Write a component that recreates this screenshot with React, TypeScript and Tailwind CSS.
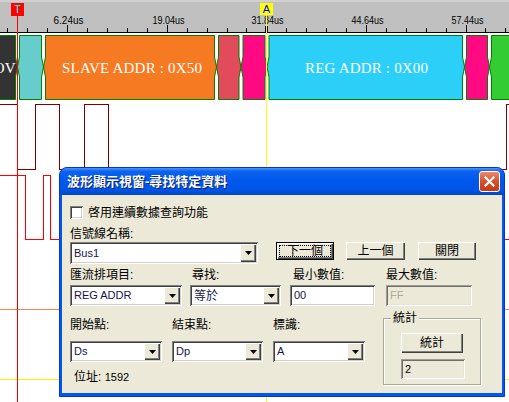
import React from 'react';

const sunken = 'shadow-[inset_1px_1px_0_#808080,inset_-1px_-1px_0_#ffffff,inset_2px_2px_0_#404040,inset_-2px_-2px_0_#d4d0c8]';
const raised = 'shadow-[inset_1px_1px_0_#ffffff,inset_-1px_-1px_0_#404040,inset_-2px_-2px_0_#808080]';
const grayField = 'shadow-[inset_1px_1px_0_#9d9c94,inset_-1px_-1px_0_#ffffff,inset_2px_2px_0_#6f6e68,inset_-2px_-2px_0_#e6e4d9]';

// ruler ticks, every 2.56us (~19.92px), major every 5th
const ticks: number[] = [];
for (let i = 0; i < 26; i++) ticks.push(Math.round(7.4 + i * 19.92));
const labels = ['6.24us', '19.04us', '31.84us', '44.64us', '57.44us'];

const segs = [
  { a: -10, b: 17.5, fill: '#333333' },
  { a: 17.5, b: 43.5, fill: '#66cccc' },
  { a: 43.5, b: 216.5, fill: '#f57a21' },
  { a: 216.5, b: 241, fill: '#e24b5c' },
  { a: 241, b: 267, fill: '#ff0a82' },
  { a: 267, b: 464.5, fill: '#2ccff8' },
  { a: 464.5, b: 489.5, fill: '#ff0a82' },
  { a: 489.5, b: 530, fill: '#33cc33' },
];

const hex = (a: number, b: number) => {
  const s = 2;
  return `${a + s},35.5 ${b - s},35.5 ${b - s},57 ${b},67 ${b - s},77 ${b - s},99.5 ${a + s},99.5 ${a + s},77 ${a},67 ${a + s},57`;
};

function Arrow() {
  return (
    <svg width="7" height="4" viewBox="0 0 7 4">
      <path d="M0 0h7L3.5 4z" fill="#000" />
    </svg>
  );
}

function Combo({ className, value, textClass = 'text-[11px]' }: { className: string; value: string; textClass?: string }) {
  return (
    <div className={`${className} flex bg-white p-[2px] ${sunken}`}>
      <span className={`flex-1 flex items-center pl-[2px] leading-none text-[#14144a] ${textClass}`}>{value}</span>
      <span className={`w-[16px] flex items-center justify-center bg-[#ece9d8] ${raised}`}>
        <Arrow />
      </span>
    </div>
  );
}

function Btn({ className, children }: { className: string; children: React.ReactNode }) {
  return (
    <div className={`${className} flex items-center justify-center bg-[#ece9d8] text-[12px] leading-none ${raised}`}>
      {children}
    </div>
  );
}

function Label({ className = '', children }: { className?: string; children: React.ReactNode }) {
  return <div className={`${className} h-[14px] leading-[14px] text-[12px] whitespace-nowrap`}>{children}</div>;
}

export default function App() {
  return (
    <div className="relative w-[509px] h-[402px] overflow-hidden bg-white flex flex-col">
      {/* time ruler */}
      <div className="relative h-[33px] shrink-0 bg-[#c0c0c0] border-b border-black shadow-[inset_0_2px_0_#d0d0d0]">
        <svg width="509" height="32" className="block" shapeRendering="crispEdges">
          {ticks.map((x, i) => {
            const major = (i - 3) % 5 === 0;
            return <line key={x} x1={x + 0.5} x2={x + 0.5} y1={major ? 25 : 28} y2={32} stroke="#000" />;
          })}
          {labels.map((t, k) => {
            const x = ticks[3 + k * 5] + 1.5;
            return (
              <text
                key={t}
                x={x}
                y={23.5}
                textAnchor="middle"
                fontFamily="Liberation Sans, sans-serif"
                fontSize="10.5"
                textLength={t.length === 6 ? 30 : 32}
                lengthAdjust="spacingAndGlyphs"
                fill="#000"
              >
                {t}
              </text>
            );
          })}
          <rect x="265" y="26" width="3" height="6" fill="#000" />
        </svg>
        <span className="absolute left-[11px] top-[3px] w-[13px] h-[13px] bg-[#ff0000] flex items-center justify-center text-[11px] leading-none font-['Liberation_Sans',sans-serif] text-[#00ffff]">
          T
        </span>
        <span className="absolute left-[260px] top-[3px] w-[13px] h-[12px] bg-[#ffff00] flex items-center justify-center text-[11px] leading-none font-['Liberation_Sans',sans-serif] text-[#0000ff]">
          A
        </span>
      </div>

      {/* bus + waveforms */}
      <svg width="509" height="369" viewBox="0 33 509 369" className="block">
        {segs.map((s) => (
          <polygon key={s.a} points={hex(s.a, s.b)} fill={s.fill} stroke="#008000" strokeWidth="1" />
        ))}
        <text x="15.5" y="68" textAnchor="end" dominantBaseline="central" fontFamily="Liberation Serif, serif" fontSize="15" fill="#fff">
          OV
        </text>
        <text x="132" y="68" textAnchor="middle" dominantBaseline="central" fontFamily="Liberation Serif, serif" fontSize="15" textLength="140" lengthAdjust="spacing" fill="#fff">
          SLAVE ADDR : 0X50
        </text>
        <text x="366.5" y="68" textAnchor="middle" dominantBaseline="central" fontFamily="Liberation Serif, serif" fontSize="15" textLength="123" lengthAdjust="spacing" fill="#fff">
          REG ADDR : 0X00
        </text>
        <g shapeRendering="crispEdges" fill="none">
          <polyline
            points="0,104.5 17.5,104.5 17.5,169.5 35.5,169.5 35.5,104.5 59.5,104.5 59.5,169.5 84.5,169.5 84.5,104.5 108.5,104.5 108.5,169.5 506.5,169.5 506.5,104.5 509,104.5"
            stroke="#800000"
          />
          <polyline points="0,175.5 25.5,175.5 25.5,239.5 43.5,239.5 43.5,175.5 50.5,175.5 50.5,239.5 509,239.5" stroke="#ff0000" />
          <line x1="0" x2="509" y1="309.5" y2="309.5" stroke="#ff8040" />
          <line x1="0" x2="509" y1="379.5" y2="379.5" stroke="#f4f400" />
        </g>
      </svg>

      {/* cursors */}
      <div className="absolute left-[17px] top-[16px] bottom-0 w-px bg-[#ff0000]" />
      <div className="absolute left-[266px] top-[15px] bottom-0 w-px bg-[#ffff00]" />

      {/* search dialog */}
      <div className="absolute left-[59px] top-[167px] w-[446px] h-[230px] flex flex-col rounded-t-[8px] border border-[#0831d9] bg-[#0058ee] font-['Liberation_Sans','Noto_Sans_CJK_TC',sans-serif] text-black">
        <div className="h-[27px] shrink-0 flex items-center justify-between pl-[7px] pr-[4px] rounded-t-[7px] bg-[linear-gradient(to_bottom,#4a98fa_0%,#0c63ee_12%,#0058ee_45%,#0055e5_80%,#0047ca_100%)]">
          <span className="text-[13px] font-bold leading-none text-white [text-shadow:1px_1px_0_#0a1e72]">波形顯示視窗-尋找特定資料</span>
          <span className="w-[21px] h-[21px] rounded-[3px] border border-white bg-[linear-gradient(to_bottom,#eb8a6c,#d7502b_50%,#c23a12)] flex items-center justify-center">
            <svg width="11" height="11" viewBox="0 0 11 11">
              <path d="M1.5 1.5l8 8M9.5 1.5l-8 8" stroke="#fff" strokeWidth="2.2" strokeLinecap="square" />
            </svg>
          </span>
        </div>

        <div className="flex-1 mx-[2px] mb-[3px] bg-[#ece9d8] pl-[8px] pt-[11px] flex flex-col">
          <div className="flex items-center h-[13px]">
            <span className={`w-[13px] h-[13px] bg-white ${sunken}`} />
            <span className="ml-[5px] text-[12px] leading-none">啓用連續數據查詢功能</span>
          </div>

          <Label className="mt-[8px]">信號線名稱:</Label>
          <div className="mt-[1px] flex items-start">
            <Combo className="w-[188px] h-[22px]" value="Bus1" />
            <div className={`ml-[18px] w-[58px] h-[18px] border border-black bg-[#ece9d8] p-[2px] ${raised}`}>
              <div className="w-full h-full border border-dotted border-black flex items-center justify-center text-[12px] leading-none">下一個</div>
            </div>
            <Btn className="ml-[12px] w-[59px] h-[18px]">上一個</Btn>
            <Btn className="ml-[13px] w-[58px] h-[18px]">關閉</Btn>
          </div>

          <div className="mt-[4px] flex">
            <Label className="w-[122px]">匯流排項目:</Label>
            <Label className="w-[101px]">尋找:</Label>
            <Label className="w-[93px]">最小數值:</Label>
            <Label>最大數值:</Label>
          </div>
          <div className="mt-[3px] flex h-[21px]">
            <Combo className="w-[112px] h-[21px]" value="REG ADDR" />
            <Combo className="ml-[8px] w-[91px] h-[21px]" value="等於" textClass="text-[12px]" />
            <div className={`ml-[9px] w-[85px] h-[21px] bg-white flex items-center pl-[4px] text-[11px] leading-none text-[#14144a] ${sunken}`}>00</div>
            <div className={`ml-[11px] w-[86px] h-[21px] bg-[#ece9d8] flex items-center pl-[4px] text-[11px] leading-none text-[#aca899] ${grayField}`}>FF</div>
          </div>

          <div className="mt-[5px] flex items-start">
            <div className="pt-[7px] flex flex-col">
              <div className="grid grid-cols-[92px_91px_92px] gap-x-[10px]">
                <Label>開始點:</Label>
                <Label>結束點:</Label>
                <Label>標識:</Label>
              </div>
              <div className="mt-[9px] grid grid-cols-[92px_91px_92px] gap-x-[10px]">
                <Combo className="h-[21px]" value="Ds" />
                <Combo className="h-[21px]" value="Dp" />
                <Combo className="h-[21px]" value="A" />
              </div>
              <Label className="mt-[8px] pl-[4px]">
                位址: <span className="text-[11px]">1592</span>
              </Label>
            </div>

            <div className="relative ml-[18px] w-[98px] pt-[7px]">
              <div className="h-[67px] border border-[#aca899] shadow-[inset_1px_1px_0_#ffffff,1px_1px_0_#ffffff] pt-[14px] pl-[17px] flex flex-col">
                <Btn className="w-[62px] h-[20px]">統計</Btn>
                <div className={`mt-[6px] w-[64px] h-[20px] bg-[#ece9d8] flex items-center pl-[4px] text-[11px] leading-none ${grayField}`}>2</div>
              </div>
              <span className="absolute left-[8px] top-0 px-[2px] bg-[#ece9d8] h-[14px] leading-[14px] text-[12px]">統計</span>
            </div>
          </div>
        </div>
      </div>
    </div>
  );
}
